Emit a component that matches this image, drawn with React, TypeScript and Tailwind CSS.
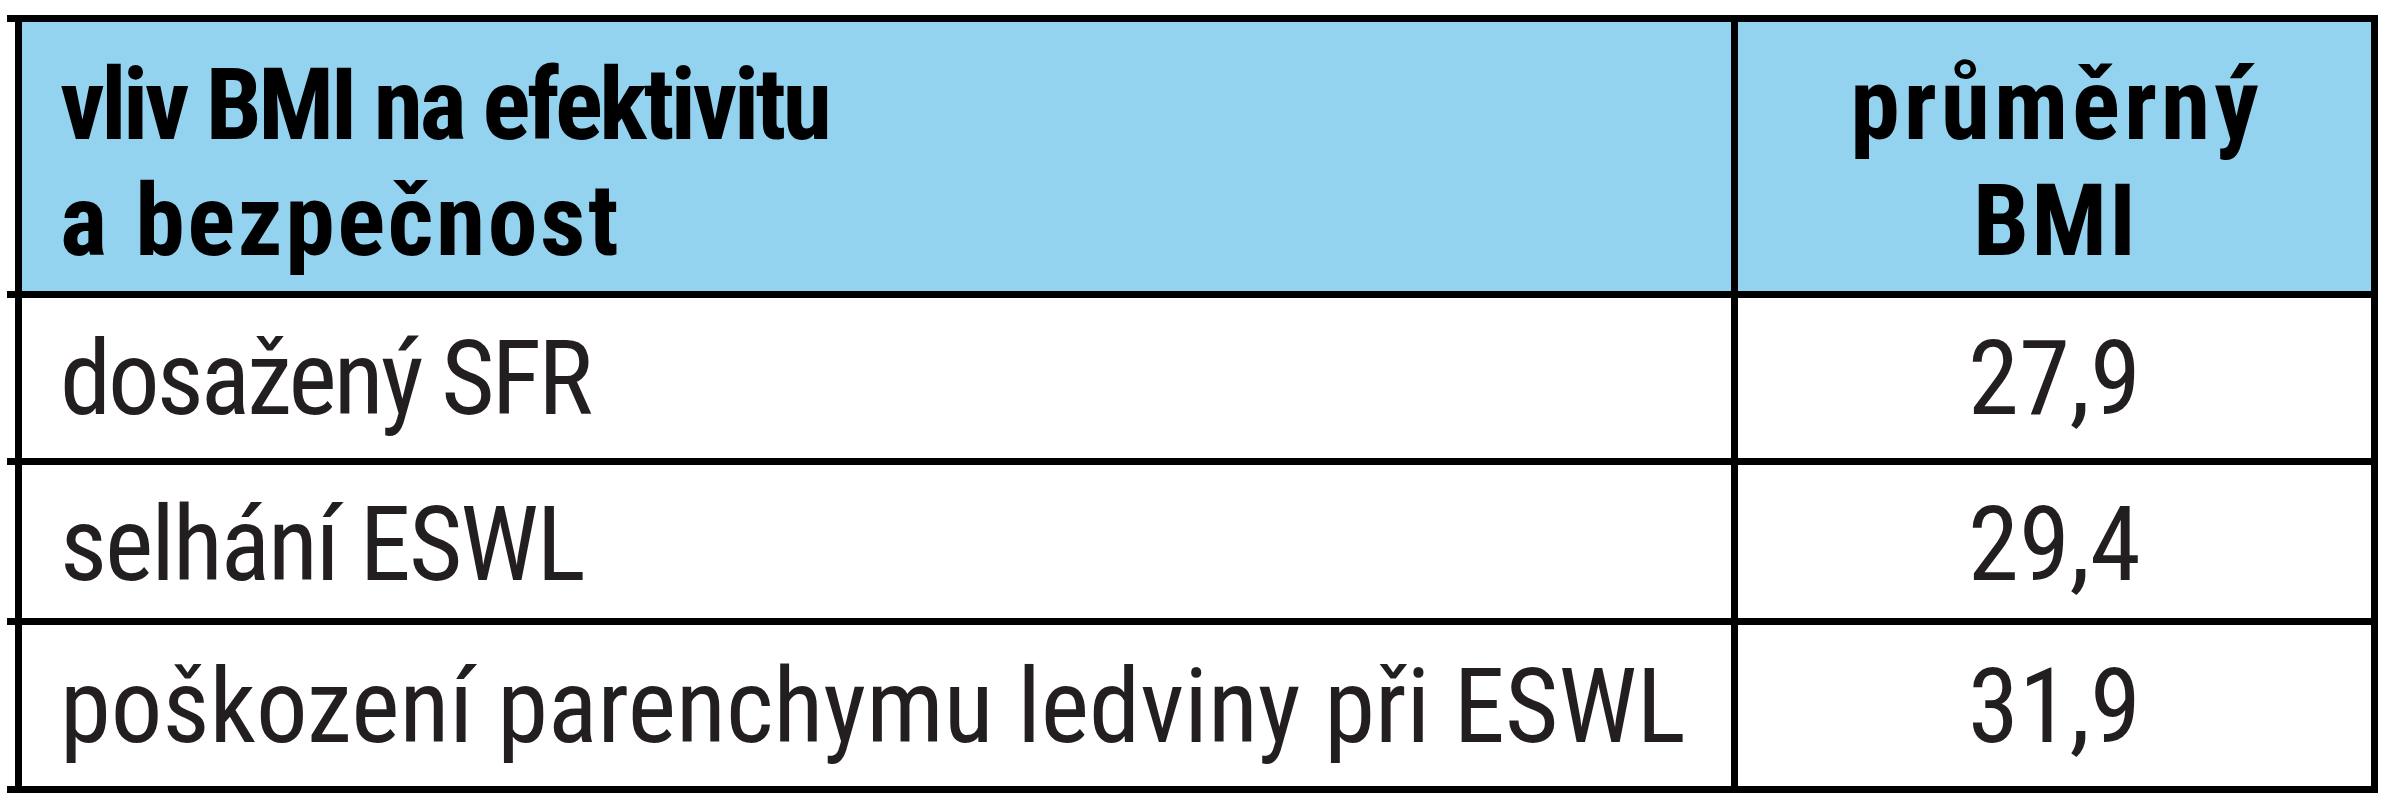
import React from "react";

const font = { fontFamily: 'Roboto, "Open Sans", sans-serif' };

function Line() {
  return <div className="h-[7px] bg-black" />;
}

function Row({ label, value, h, pt, track }: { label: string; value: string; h: string; pt: string; track: string }) {
  return (
    <div className={`ml-[8px] flex border-x-[7px] border-black bg-white ${h}`}>
      <div className={`w-[1709px] pl-[38px] ${pt} ${track} text-[103px] leading-[116px] font-stretch-[75%] text-[#231f20] whitespace-nowrap`}>{label}</div>
      <div className="w-[7px] bg-black" />
      <div className={`flex-1 ${pt} text-center text-[103px] leading-[116px] font-stretch-[75%] text-[#231f20]`}>{value}</div>
    </div>
  );
}

export default function App() {
  return (
    <div className="min-h-[800px] w-[2393px] bg-white pt-[15px] pl-[7px]" style={font}>
      <div className="w-[2371px]">
        <Line />
        <div className="ml-[8px] flex h-[269px] border-x-[7px] border-black bg-[#93d3ef]">
          <div className="w-[1709px] pl-[38px] pt-[25px] text-[100px] font-bold leading-[116px] font-stretch-[75%] text-black">
            <div className="whitespace-nowrap tracking-[-3.5px]">vliv BMI na efektivitu</div>
            <div className="whitespace-nowrap tracking-[2.5px]">a bezpečnost</div>
          </div>
          <div className="w-[7px] bg-black" />
          <div className="flex-1 pt-[25px] text-center text-[100px] font-bold leading-[116px] font-stretch-[75%] text-black">
            <div className="tracking-[4px] pl-[4px]">průměrný</div>
            <div className="tracking-[2px] pl-[2px]">BMI</div>
          </div>
        </div>
        <Line />
        <Row label="dosažený SFR" value="27,9" h="h-[160px]" pt="pt-[23px]" track="tracking-[-3px]" />
        <Line />
        <Row label="selhání ESWL" value="29,4" h="h-[153px]" pt="pt-[22px]" track="tracking-[-2px]" />
        <Line />
        <Row label="poškození parenchymu ledviny při ESWL" value="31,9" h="h-[161px]" pt="pt-[24px]" track="tracking-normal" />
        <Line />
      </div>
    </div>
  );
}
